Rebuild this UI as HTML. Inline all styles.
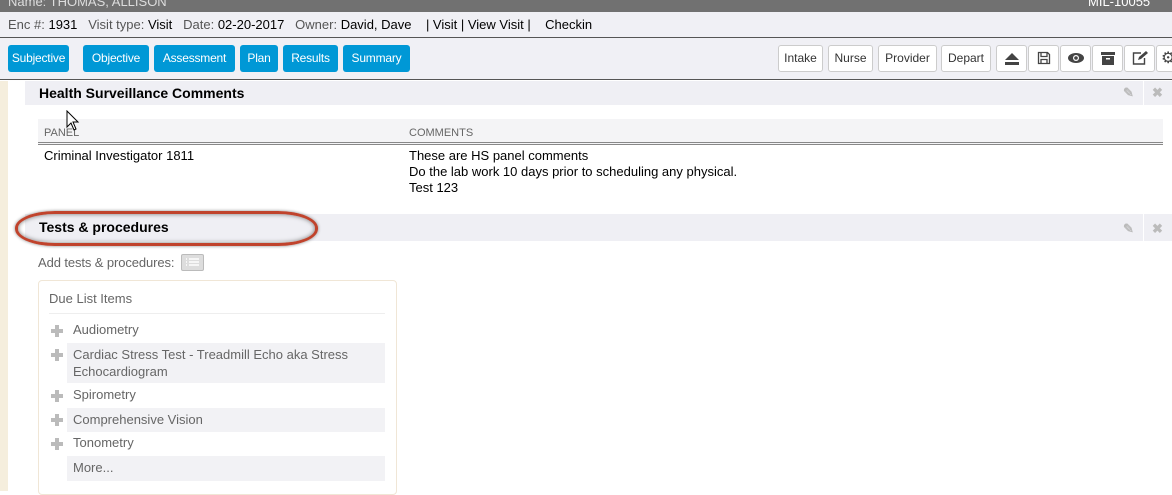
<!DOCTYPE html>
<html><head><style>
*{box-sizing:border-box;margin:0;padding:0}
body{width:1172px;height:491px;overflow:hidden;background:#fff;font-family:"Liberation Sans",Arial,sans-serif;font-size:13px;color:#000;position:relative}
.a{position:absolute}
.top{left:0;top:0;width:1172px;height:12px;background:#717171;color:#fff;overflow:hidden}
.info{left:0;top:12px;width:1172px;height:26px;background:#f0f0f5;border-bottom:1px solid #555;font-size:13px;line-height:25px;padding-left:8px}
.info .l{color:#555}
.tb{left:0;top:38px;width:1172px;height:42px;background:#f0f0f5;border-bottom:1px solid #555}
.bb{position:absolute;top:7px;height:27px;background:#0098d6;color:#fff;border-radius:3px;font-size:12px;line-height:27px;text-align:center;letter-spacing:-0.2px}
.wb{position:absolute;top:7px;height:27px;background:#fff;border:1px solid #ccc;border-radius:3px;color:#333;font-size:12px;line-height:25px;text-align:center}
.strip{left:0;top:81px;width:8px;height:410px;background:#f5eedd}
.hdr{background:#efeff4;font-weight:bold;font-size:14px;line-height:24px;padding-left:14px}
.ico{position:absolute;top:0;color:#bbb;font-size:13px}
.row{position:absolute;left:67px;width:318px;color:#666;font-size:13px;padding-left:6px}
.plus{position:absolute;left:51px;width:12px;height:12px}
.plus:before{content:"";position:absolute;left:4px;top:0;width:4px;height:12px;background:#bbb}
.plus:after{content:"";position:absolute;left:0;top:4px;width:12px;height:4px;background:#bbb}
</style></head><body>
<div class="a top"><span style="position:absolute;left:8px;top:-6px;font-size:13px;color:#ddd">Name: THOMAS, ALLISON</span><span style="position:absolute;left:1088px;top:-6px;color:#fff">MIL-10055</span></div>
<div class="a info"><span class="l">Enc #:</span> 1931 &nbsp;&nbsp;<span class="l">Visit type:</span> Visit &nbsp;&nbsp;<span class="l">Date:</span> 02-20-2017 &nbsp;&nbsp;<span class="l">Owner:</span> David, Dave &nbsp;&nbsp;&nbsp;| Visit | View Visit | &nbsp;&nbsp;&nbsp;Checkin</div>
<div class="a tb">
<div class="bb" style="left:8px;width:61px">Subjective</div>
<div class="bb" style="left:83px;width:66px">Objective</div>
<div class="bb" style="left:154px;width:81px">Assessment</div>
<div class="bb" style="left:240px;width:38px">Plan</div>
<div class="bb" style="left:283px;width:55px">Results</div>
<div class="bb" style="left:343px;width:67px">Summary</div>
<div class="wb" style="left:778px;width:45px">Intake</div>
<div class="wb" style="left:828px;width:45px">Nurse</div>
<div class="wb" style="left:878px;width:59px">Provider</div>
<div class="wb" style="left:941px;width:50px">Depart</div>
<div class="wb" style="left:996px;width:31px"><svg width="16" height="14" viewBox="0 0 16 14" style="margin-top:6px"><path d="M8 1l7 7H1z" fill="#444"/><rect x="1" y="10" width="14" height="3" fill="#444"/></svg></div>
<div class="wb" style="left:1028px;width:31px"><svg width="14" height="14" viewBox="0 0 14 14" style="margin-top:5px"><path d="M1.5 1.5h9l2 2v9h-11z M4 1.5v4h6v-4 M4 12.5v-4h6v4" fill="none" stroke="#444" stroke-width="1.3"/></svg></div>
<div class="wb" style="left:1060px;width:31px"><svg width="18" height="12" viewBox="0 0 18 12" style="margin-top:6px"><ellipse cx="9" cy="6" rx="8" ry="5" fill="#444"/><circle cx="9" cy="6" r="3" fill="#fff"/><circle cx="9" cy="6" r="1.8" fill="#444"/></svg></div>
<div class="wb" style="left:1092px;width:31px"><svg width="14" height="13" viewBox="0 0 14 13" style="margin-top:6px"><rect x="0" y="0" width="14" height="3" fill="#444"/><rect x="1" y="4" width="12" height="9" fill="#444"/><rect x="5" y="6" width="4" height="1.5" fill="#fff"/></svg></div>
<div class="wb" style="left:1124px;width:31px"><svg width="16" height="14" viewBox="0 0 16 14" style="margin-top:5px"><path d="M9 2H1.5v11h11V7" fill="none" stroke="#444" stroke-width="1.4"/><path d="M6 9l1-3 7-6 2 2-7 6z" fill="#444"/></svg></div>
<div class="wb" style="left:1156px;width:31px;text-align:left;padding-left:4px;font-size:16px;color:#444">⚙</div>
</div>
<div class="a strip"></div>
<div class="a hdr" style="left:25px;top:81px;width:1147px;height:24px">Health Surveillance Comments
<span class="ico" style="left:1098px">✎</span><span style="position:absolute;left:1118px;top:0;width:1px;height:24px;background:#fff"></span><span class="ico" style="left:1127px;font-weight:bold">✖</span></div>
<div class="a" style="left:38px;top:119px;width:1125px;height:26px;background:#f4f4f6;border-bottom:3px double #888;font-size:11px;color:#666;line-height:24px"><span style="position:absolute;left:6px;top:2px">PANEL</span><span style="position:absolute;left:371px;top:2px">COMMENTS</span></div>
<div class="a" style="left:44px;top:148px;line-height:16px">Criminal Investigator 1811</div>
<div class="a" style="left:409px;top:148px;line-height:16px">These are HS panel comments<br>Do the lab work 10 days prior to scheduling any physical.<br>Test 123</div>
<svg class="a" style="left:66px;top:110px" width="16" height="22" viewBox="0 0 16 22"><path d="M1 1v16l4-4 3 7 2-1-3-7h5z" fill="#fff" stroke="#000" stroke-width="1"/></svg>
<div class="a hdr" style="left:25px;top:214px;width:1147px;height:27px;line-height:26px">Tests &amp; procedures
<span class="ico" style="left:1098px;top:2px">✎</span><span style="position:absolute;left:1118px;top:0;width:1px;height:27px;background:#fff"></span><span class="ico" style="left:1127px;top:2px;font-weight:bold">✖</span></div>
<div class="a" style="left:15px;top:211px;width:303px;height:35px;border:3px solid #c0432c;border-radius:40px/17px;box-shadow:inset 0 0 5px #777,0 0 3px #888"></div>
<div class="a" style="left:38px;top:255px;color:#666;font-size:13px;letter-spacing:-0.1px">Add tests &amp; procedures:</div>
<div class="a" style="left:181px;top:254px;width:23px;height:17px;background:#ddd;border:1px solid #bbb;border-radius:2px"><svg width="21" height="15" viewBox="0 0 21 15"><path d="M4 4h1M7 4h10M4 7h1M7 7h10M4 10h1M7 10h10" stroke="#fff" stroke-width="1.6"/></svg></div>
<div class="a" style="left:38px;top:280px;width:359px;height:215px;border:1px solid #f0e6d6;border-radius:4px"></div>
<div class="a" style="left:49px;top:291px;color:#666;font-size:13px">Due List Items</div>
<div class="a" style="left:49px;top:313px;width:336px;height:1px;background:#eee"></div>
<div class="plus" style="top:325px"></div><div class="row" style="top:321px;line-height:18px">Audiometry</div>
<div class="plus" style="top:349px"></div><div class="row" style="top:343px;height:40px;background:#f2f2f5;padding-top:3px;line-height:17px">Cardiac Stress Test - Treadmill Echo aka Stress Echocardiogram</div>
<div class="plus" style="top:390px"></div><div class="row" style="top:386px;line-height:18px">Spirometry</div>
<div class="plus" style="top:414px"></div><div class="row" style="top:408px;height:24px;background:#f2f2f5;line-height:23px">Comprehensive Vision</div>
<div class="plus" style="top:438px"></div><div class="row" style="top:434px;line-height:18px">Tonometry</div>
<div class="row" style="top:456px;height:25px;background:#f2f2f5;line-height:24px">More...</div>
</body></html>
